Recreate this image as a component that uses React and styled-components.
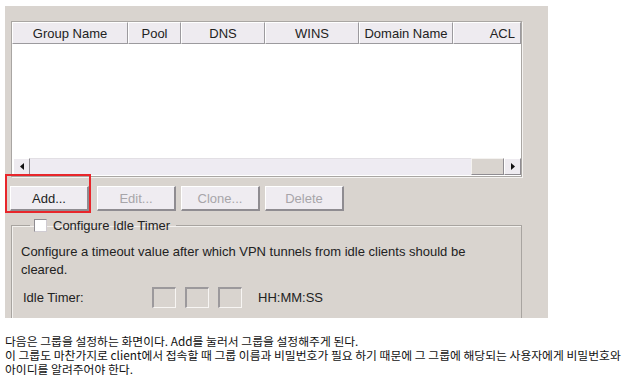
import React from 'react';
import styled, { createGlobalStyle } from 'styled-components';

const GlobalStyle = createGlobalStyle`
  body {
    margin: 0;
    background: #ffffff;
    font-family: "Liberation Sans", Arial, sans-serif;
  }
`;

const Page = styled.div`
  width: 639px;
  height: 380px;
  padding: 6px 0 0 5px;
  box-sizing: border-box;
`;

const Panel = styled.div`
  width: 543px;
  height: 312px;
  background: #d9d4cf;
  padding: 15px 0 0 6px;
  box-sizing: border-box;
  overflow: hidden;
  font-size: 13px;
  color: #222;
`;

const TableFrame = styled.div`
  width: 511px;
  height: 156px;
  box-sizing: border-box;
  border: 1px solid #a9a6a3;
  box-shadow: 1px 1px 0 #f4f2f0;
  background: #ffffff;
  display: flex;
  flex-direction: column;
`;

const HeaderRow = styled.div`
  display: flex;
  height: 22px;
`;

const HeaderCell = styled.div`
  width: ${(p) => p.$w}px;
  flex: ${(p) => (p.$grow ? 1 : 'none')};
  box-sizing: border-box;
  background: #eeebf0;
  border-top: 1px solid #ffffff;
  border-left: 1px solid #ffffff;
  border-right: 1px solid #9c9a9e;
  border-bottom: 1px solid #9c9a9e;
  display: flex;
  align-items: center;
  justify-content: ${(p) => (p.$right ? 'flex-end' : 'center')};
  padding-right: ${(p) => (p.$right ? '5px' : '0')};
  font-size: 13px;
  color: #222;
`;

const TableBody = styled.div`
  flex: 1;
  background: #ffffff;
`;

const ScrollBar = styled.div`
  display: flex;
  height: 17px;
  margin: 0 0 1px 1px;
`;

const ScrollButton = styled.div`
  width: 17px;
  box-sizing: border-box;
  background: #eeebf0;
  border-top: 1px solid #ffffff;
  border-left: 1px solid #ffffff;
  border-right: 1px solid #8f8c91;
  border-bottom: 1px solid #8f8c91;
  display: flex;
  align-items: center;
  justify-content: center;
`;

const Track = styled.div`
  flex: 1;
  background: #eeebf2;
  border-top: 1px solid #e2dfe4;
`;

const Thumb = styled.div`
  width: 33px;
  box-sizing: border-box;
  background: #d9d4cf;
  border-top: 1px solid #f4f2f0;
  border-left: 1px solid #f4f2f0;
  border-right: 1px solid #8f8c91;
  border-bottom: 1px solid #8f8c91;
`;

const ButtonRow = styled.div`
  display: flex;
  gap: 5px;
  margin: 9px 0 0 -1px;
`;

const ButtonWrap = styled.div`
  position: relative;
  margin-right: ${(p) => p.$mr || 0}px;
`;

const Button = styled.div`
  width: 79px;
  height: 25px;
  box-sizing: border-box;
  background: #efecf1;
  border-top: 1px solid #ffffff;
  border-left: 1px solid #ffffff;
  border-right: 2px solid #8f8c91;
  border-bottom: 2px solid #8f8c91;
  display: flex;
  align-items: center;
  justify-content: center;
  font-size: 13px;
  color: ${(p) => (p.$disabled ? '#a7a5a9' : '#222')};
`;

const Highlight = styled.div`
  position: absolute;
  top: -12px;
  left: -5px;
  right: -2px;
  bottom: -2px;
  border: 2px solid #e8262b;
  pointer-events: none;
`;

const Group = styled.fieldset`
  margin: 7px 0 0 0;
  width: 511px;
  height: 120px;
  box-sizing: border-box;
  border: 1px solid #a8a4a0;
  box-shadow: inset 1px 1px 0 #f3f1ee;
  padding: 0 0 0 9px;
`;

const Legend = styled.legend`
  margin-left: 9px;
  padding: 0 6px 0 4px;
  display: flex;
  align-items: center;
  gap: 6px;
  font-size: 13px;
  color: #222;
`;

const CheckBox = styled.span`
  width: 13px;
  height: 13px;
  box-sizing: border-box;
  background: #ffffff;
  border-top: 1px solid #8f8c91;
  border-left: 1px solid #8f8c91;
  border-right: 1px solid #d0ccd2;
  border-bottom: 1px solid #d0ccd2;
`;

const Description = styled.p`
  margin: 10px 0 0 0;
  width: 470px;
  line-height: 18px;
  font-size: 13px;
  color: #222;
`;

const TimerRow = styled.div`
  display: flex;
  align-items: center;
  margin-top: 8px;
  padding-left: 2px;
`;

const TimerLabel = styled.span`
  width: 129px;
  font-size: 13px;
`;

const TimerBox = styled.span`
  width: 24px;
  height: 21px;
  box-sizing: border-box;
  margin-right: 9px;
  background: #d9d4cf;
  border-top: 2px solid #9c999c;
  border-left: 2px solid #9c999c;
  border-right: 1px solid #f7f5f3;
  border-bottom: 1px solid #f7f5f3;
`;

const TimerUnit = styled.span`
  margin-left: 7px;
  font-size: 13px;
`;

const Notes = styled.div`
  margin-top: 16px;
  font-family: "Noto Sans CJK KR", "Liberation Sans", sans-serif;
  font-size: 11.8px;
  line-height: 14px;
  color: #111;
  white-space: nowrap;
`;

const columns = [
  { name: 'Group Name', w: 116 },
  { name: 'Pool', w: 53 },
  { name: 'DNS', w: 84 },
  { name: 'WINS', w: 94 },
  { name: 'Domain Name', w: 94 },
  { name: 'ACL', grow: true, right: true },
];

const Arrow = ({ dir }) => (
  <svg width="4" height="7" viewBox="0 0 4 7">
    <path d={dir === 'left' ? 'M4 0 L0 3.5 L4 7 Z' : 'M0 0 L4 3.5 L0 7 Z'} fill="#111" />
  </svg>
);

export default function App() {
  return (
    <Page>
      <GlobalStyle />
      <Panel>
        <TableFrame>
          <HeaderRow>
            {columns.map((c) => (
              <HeaderCell key={c.name} $w={c.w} $grow={c.grow} $right={c.right}>
                {c.name}
              </HeaderCell>
            ))}
          </HeaderRow>
          <TableBody />
          <ScrollBar>
            <ScrollButton>
              <Arrow dir="left" />
            </ScrollButton>
            <Track />
            <Thumb />
            <ScrollButton>
              <Arrow dir="right" />
            </ScrollButton>
          </ScrollBar>
        </TableFrame>

        <ButtonRow>
          <ButtonWrap $mr={3}>
            <Button>Add...</Button>
            <Highlight />
          </ButtonWrap>
          <ButtonWrap>
            <Button $disabled>Edit...</Button>
          </ButtonWrap>
          <ButtonWrap>
            <Button $disabled>Clone...</Button>
          </ButtonWrap>
          <ButtonWrap>
            <Button $disabled>Delete</Button>
          </ButtonWrap>
        </ButtonRow>

        <Group>
          <Legend>
            <CheckBox />
            Configure Idle Timer
          </Legend>
          <Description>
            Configure a timeout value after which VPN tunnels from idle clients should be cleared.
          </Description>
          <TimerRow>
            <TimerLabel>Idle Timer:</TimerLabel>
            <TimerBox />
            <TimerBox />
            <TimerBox />
            <TimerUnit>HH:MM:SS</TimerUnit>
          </TimerRow>
        </Group>
      </Panel>
      <Notes>
        다음은 그룹을 설정하는 화면이다. Add를 눌러서 그룹을 설정해주게 된다.
        <br />
        이 그룹도 마찬가지로 client에서 접속할 때 그룹 이름과 비밀번호가 필요 하기 때문에 그 그룹에 해당되는 사용자에게 비밀번호와
        <br />
        아이디를 알려주어야 한다.
      </Notes>
    </Page>
  );
}
